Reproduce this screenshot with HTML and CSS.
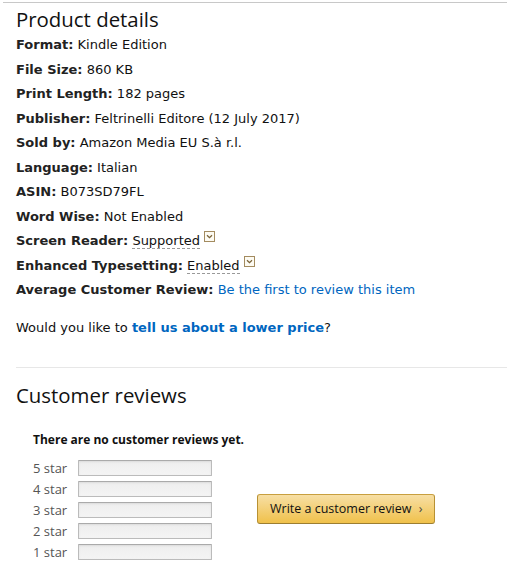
FILE: index.html
```html
<!DOCTYPE html>
<html>
<head>
<meta charset="utf-8">
<link rel="stylesheet" href="styles.css">
</head>
<body>
<div class="topline"></div>
<div class="page">
  <h2 class="heading">Product details</h2>
  <ul class="details">
    <li><b>Format:</b> Kindle Edition</li>
    <li><b>File Size:</b> 860 KB</li>
    <li><b>Print Length:</b> 182 pages</li>
    <li><b>Publisher:</b> Feltrinelli Editore (12 July 2017)</li>
    <li><b>Sold by:</b> Amazon Media EU S.à r.l.</li>
    <li><b>Language:</b> Italian</li>
    <li><b>ASIN:</b> B073SD79FL</li>
    <li><b>Word Wise:</b> Not Enabled</li>
    <li><b>Screen Reader:</b> <span class="dotted">Supported</span> <span class="popover"><svg width="11" height="11" viewBox="0 0 11 11"><rect x="0.5" y="0.5" width="10" height="10" fill="#fdfbf3" stroke="#a38b5f"/><path d="M3 4.2 L5.5 6.7 L8 4.2" fill="none" stroke="#7a6338" stroke-width="1.3"/></svg></span></li>
    <li><b>Enhanced Typesetting:</b> <span class="dotted">Enabled</span> <span class="popover"><svg width="11" height="11" viewBox="0 0 11 11"><rect x="0.5" y="0.5" width="10" height="10" fill="#fdfbf3" stroke="#a38b5f"/><path d="M3 4.2 L5.5 6.7 L8 4.2" fill="none" stroke="#7a6338" stroke-width="1.3"/></svg></span></li>
    <li><b>Average Customer Review:</b> <a class="link" href="#">Be the first to review this item</a></li>
  </ul>
  <p class="lower-price">Would you like to <a class="bold-link" href="#">tell us about a lower price</a>?</p>
  <hr class="divider">
  <h2 class="heading reviews-heading">Customer reviews</h2>
  <div class="reviews">
    <p class="no-reviews">There are no customer reviews yet.</p>
    <div class="review-body">
      <div class="histogram">
        <span class="star-label">5 star</span><span class="bar"></span>
        <span class="star-label">4 star</span><span class="bar"></span>
        <span class="star-label">3 star</span><span class="bar"></span>
        <span class="star-label">2 star</span><span class="bar"></span>
        <span class="star-label">1 star</span><span class="bar"></span>
      </div>
      <a class="write-btn" href="#">Write a customer review <span class="chev">›</span></a>
    </div>
  </div>
</div>
</body>
</html>
```
FILE: styles.css
```css
html, body {
  margin: 0;
  padding: 0;
  background: #fff;
}
body {
  font-family: "DejaVu Sans", Verdana, sans-serif;
  color: #111;
}
.topline {
  margin: 2px 0 0 3px;
  border-top: 1px solid #c8c8c8;
  height: 0;
}
.page {
  padding: 0 0 0 16px;
}
.heading {
  font-family: "Open Sans", "Segoe UI", sans-serif;
  font-weight: 400;
  font-size: 20.4px;
  line-height: 28px;
  margin: 2px 0 0 0;
  color: #111;
}
.details {
  list-style: none;
  margin: 0;
  padding: 0;
  font-size: 13px;
  line-height: 24.5px;
  color: #111;
}
.details b {
  font-weight: 700;
  color: #222;
}
.dotted {
  border-bottom: 1px dashed #999;
}
.popover {
  display: inline-block;
  vertical-align: 3px;
  line-height: 0;
}
.link {
  color: #0066c0;
  text-decoration: none;
}
.lower-price {
  font-size: 13px;
  line-height: 20px;
  margin: 15px 0 0 0;
  color: #111;
}
.bold-link {
  color: #0066c0;
  font-weight: 700;
  text-decoration: none;
}
.divider {
  border: 0;
  border-top: 1px solid #e7e7e7;
  margin: 29px 0 0 0;
  height: 0;
}
.reviews-heading {
  margin-top: 13px;
}
.reviews {
  padding-left: 17px;
}
.no-reviews {
  font-family: "Open Sans", "Segoe UI", sans-serif;
  font-weight: 700;
  font-size: 12px;
  line-height: 18px;
  margin: 22px 0 0 0;
  color: #111;
}
.review-body {
  display: flex;
  align-items: center;
  gap: 45px;
  margin-top: 11px;
}
.histogram {
  display: grid;
  grid-template-columns: 45px 134px;
  row-gap: 5px;
  align-items: center;
}
.star-label {
  font-family: "Open Sans", "Segoe UI", sans-serif;
  font-size: 13px;
  line-height: 16px;
  color: #555;
}
.bar {
  display: block;
  height: 14px;
  border: 1px solid #bbb;
  border-top-color: #aaa;
  border-radius: 1px;
  background: linear-gradient(#eee, #f4f4f4);
  box-shadow: inset 0 1px 2px rgba(0,0,0,0.08);
}
.write-btn {
  display: inline-block;
  box-sizing: border-box;
  width: 178px;
  height: 30px;
  line-height: 28px;
  padding-left: 12px;
  font-family: "Open Sans", "Segoe UI", sans-serif;
  font-size: 12.5px;
  color: #111;
  text-decoration: none;
  border: 1px solid #a88734;
  border-color: #c89f3f #b89133 #9c7e31;
  border-radius: 3px;
  background: linear-gradient(#f7dfa5, #f0c14b);
  margin-bottom: 2px;
}
.chev {
  color: #444;
  margin-left: 4px;
}
```
